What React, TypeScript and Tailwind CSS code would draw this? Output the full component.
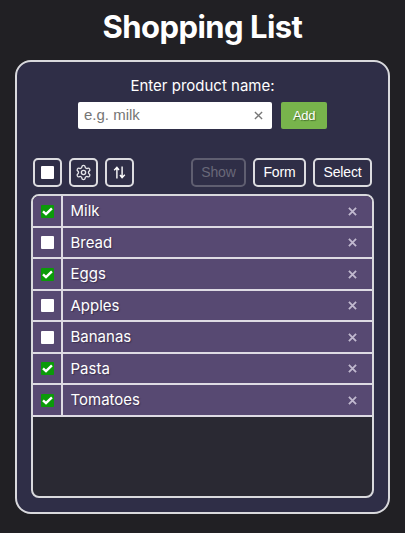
import { Settings } from "lucide-react";

const items = [
  { name: "Milk", done: true },
  { name: "Bread", done: false },
  { name: "Eggs", done: true },
  { name: "Apples", done: false },
  { name: "Bananas", done: false },
  { name: "Pasta", done: true },
  { name: "Tomatoes", done: true },
];

const toolButton =
  "flex h-[29px] items-center justify-center rounded-[5px] border-2 border-[#dcdce0] text-white";

function Cross({ className }: { className: string }) {
  return (
    <svg viewBox="0 0 10 10" className={className} fill="none" stroke="currentColor">
      <path d="M1 1L9 9M9 1L1 9" />
    </svg>
  );
}

function CheckBox({ checked }: { checked: boolean }) {
  return (
    <span
      className={`flex size-[13px] items-center justify-center rounded-[1px] ${
        checked ? "bg-[#0b9a09]" : "bg-white"
      }`}
    >
      {checked && (
        <svg viewBox="0 0 13 13" className="size-[13px]" fill="none" stroke="white" strokeWidth="2.4">
          <path d="M2 6.4L5 9.2L10.9 3.4" />
        </svg>
      )}
    </span>
  );
}

export default function App() {
  return (
    <div className="flex h-[533px] w-[405px] flex-col items-center bg-[#212024] font-['Inter',sans-serif] text-white">
      <h1 className="mt-[7px] h-[53px] text-[31px] leading-[40px] font-bold tracking-[-0.55px]">
        Shopping List
      </h1>
      <main className="flex h-[454px] w-[375px] flex-col rounded-[16px] border-2 border-[#d9d9dd] bg-[#2f2e47] px-[14px]">
        <label className="mt-[13px] text-center text-[15px] leading-[22px]">Enter product name:</label>
        <div className="mt-[5px] flex gap-[9px] pl-[47px]">
          <div className="flex h-[27px] w-[194px] items-center justify-between rounded-[2px] bg-white pr-[9px] pl-[6px]">
            <span className="font-['Liberation_Sans',sans-serif] text-[15px] text-[#757575]">e.g. milk</span>
            <Cross className="size-[9px] stroke-[1.5] text-[#777777]" />
          </div>
          <button className="h-[27px] w-[46px] rounded-[2px] bg-[#78b44c] font-['Liberation_Sans',sans-serif] text-[13px] tracking-[-0.4px] [text-shadow:1px_1px_1px_#47702c]">
            Add
          </button>
        </div>
        <div className="mt-[29px] flex pl-[2px] font-['Liberation_Sans',sans-serif] text-[14px] tracking-[-0.15px]">
          <button className={`${toolButton} w-[29px]`}>
            <span className="size-[13px] rounded-[1px] bg-white" />
          </button>
          <button className={`${toolButton} ml-[7px] w-[29px]`}>
            <Settings className="size-[17px] text-[#e4e4e8]" strokeWidth={1.9} />
          </button>
          <button className={`${toolButton} ml-[7px] w-[29px]`}>
            <svg viewBox="0 0 13 13" className="size-[13px]" fill="none" stroke="currentColor" strokeWidth="1.4">
              <path d="M3.9 12.5V1M1.2 4.2L3.9 1.3L6 4M9.1 .5V12M7 9L9.1 11.7L11.8 8.8" />
            </svg>
          </button>
          <button className="ml-auto flex h-[29px] w-[55px] items-center justify-center rounded-[5px] border-2 border-[#5f5e70] text-[#696879]">
            Show
          </button>
          <button className={`${toolButton} ml-[7px] w-[53px]`}>Form</button>
          <button className={`${toolButton} mr-[2px] ml-[7px] w-[59px]`}>Select</button>
        </div>
        <ul className="mt-[7px] h-[304px] w-[343px] overflow-hidden rounded-[8px] border-2 border-[#d9d9dd] bg-[#2a2933]">
          {items.map((item) => (
            <li
              key={item.name}
              className="flex h-[31.5px] border-b-2 border-[#dedbe4] bg-[#574972]"
            >
              <div className="flex w-[30px] items-center justify-center border-r-2 border-[#dedbe4] pt-px">
                <CheckBox checked={item.done} />
              </div>
              <span className="flex-1 pl-[7.5px] text-[15px] leading-[30px] [text-shadow:1px_1px_1px_#3b3050]">
                {item.name}
              </span>
              <Cross className="mt-px mr-[15px] size-[9px] self-center stroke-2 text-[#c1b9cf]" />
            </li>
          ))}
        </ul>
      </main>
    </div>
  );
}
